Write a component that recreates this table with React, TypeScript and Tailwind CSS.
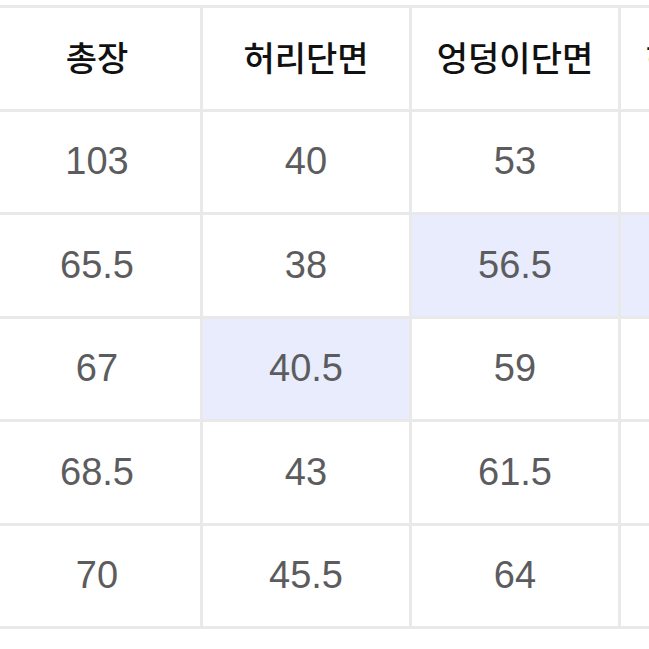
import React from "react";

const header = ["총장", "허리단면", "엉덩이단면", "허벅지단면"];
const rows: { v: string; hl?: boolean }[][] = [
  [{ v: "103" }, { v: "40" }, { v: "53" }, { v: "32" }],
  [{ v: "65.5" }, { v: "38" }, { v: "56.5", hl: true }, { v: "35", hl: true }],
  [{ v: "67" }, { v: "40.5", hl: true }, { v: "59" }, { v: "36.5" }],
  [{ v: "68.5" }, { v: "43" }, { v: "61.5" }, { v: "38" }],
  [{ v: "70" }, { v: "45.5" }, { v: "64" }, { v: "39.5" }],
];

export default function App() {
  return (
    <div className="w-[649px] h-[649px] overflow-hidden bg-white">
      <div className="mt-[5px] ml-[-9px] w-max grid grid-cols-[206px_206px_206px_206px] auto-rows-[100.5px] gap-[3px] p-[3px] bg-[#e9e9ea]">
        {header.map((h) => (
          <div
            key={h}
            className="bg-white flex items-center justify-center pb-[4px] text-[34px] font-medium text-[#111] whitespace-nowrap"
            style={{ fontFamily: '"Noto Sans CJK KR", "Noto Sans", sans-serif' }}
          >
            {h}
          </div>
        ))}
        {rows.flatMap((r, i) =>
          r.map((c, j) => (
            <div
              key={`${i}-${j}`}
              className={`${c.hl ? "bg-[#e8ecfc]" : "bg-white"} flex items-center justify-center text-[38px] text-[#5c5c5e]`}
              style={{ fontFamily: '"Liberation Sans", Arial, sans-serif' }}
            >
              {c.v}
            </div>
          ))
        )}
      </div>
    </div>
  );
}
